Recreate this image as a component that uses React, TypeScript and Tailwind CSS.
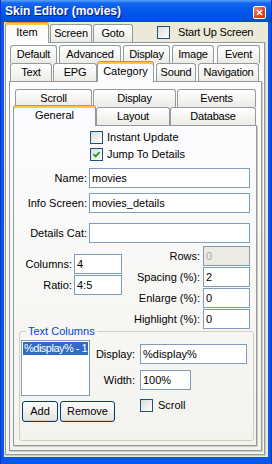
import React from "react";

const font = "font-['Liberation_Sans',Arial,sans-serif]";

function Check({ checked = false }: { checked?: boolean }) {
  return (
    <span className="flex h-[13px] w-[13px] shrink-0 items-center justify-center border border-[#1C5180] bg-linear-to-br from-[#DCDCD7] to-white">
      {checked && (
        <svg width="9" height="9" viewBox="0 0 9 9">
          <path d="M1.5 4.2 L3.6 6.4 L7.6 2.2" stroke="#21A121" strokeWidth="1.9" fill="none" />
        </svg>
      )}
    </span>
  );
}

function Field({ value, cls, disabled = false }: { value: string; cls: string; disabled?: boolean }) {
  return (
    <div
      className={`${cls} flex h-[20px] shrink-0 items-center overflow-hidden whitespace-nowrap border border-[#7F9DB9] pl-[2px] leading-none ${
        disabled ? "bg-[#EBEBE4] text-[#ACA899]" : "bg-white text-black"
      }`}
    >
      {value}
    </div>
  );
}

function Tab({ label, cls, sel = false }: { label: string; cls: string; sel?: boolean }) {
  if (sel) {
    return (
      <div
        className={`${cls} relative z-10 -mb-px flex h-[21px] shrink-0 items-center justify-center rounded-t-[3px] border border-b-0 border-[#919B9C] border-t-[#E68B2C] bg-[#FCFCFE] pb-[1px] shadow-[inset_0_2px_0_#FFC73C]`}
      >
        {label}
      </div>
    );
  }
  return (
    <div
      className={`${cls} flex h-[18px] shrink-0 items-center justify-center whitespace-nowrap rounded-t-[3px] border border-b-0 border-[#919B9C] bg-linear-to-b from-white to-[#ECEBE6] tracking-[-0.2px]`}
    >
      {label}
    </div>
  );
}

function Btn({ label, cls }: { label: string; cls: string }) {
  return (
    <div
      className={`${cls} flex h-[21px] shrink-0 items-center justify-center rounded-[3px] border border-[#003C74] bg-linear-to-b from-white to-[#E3E2DA] shadow-[inset_0_-1px_0_#D6D0C5]`}
    >
      {label}
    </div>
  );
}

function LabeledField({
  label,
  value,
  labelCls,
  fieldCls,
  rowCls = "",
  disabled = false,
}: {
  label: string;
  value: string;
  labelCls: string;
  fieldCls: string;
  rowCls?: string;
  disabled?: boolean;
}) {
  return (
    <div className={`flex items-center ${rowCls}`}>
      <span className={`${labelCls} shrink-0 whitespace-nowrap text-right`}>{label}</span>
      <Field value={value} cls={fieldCls} disabled={disabled} />
    </div>
  );
}

export default function App() {
  return (
    <div
      className={`${font} flex h-[464px] w-[272px] select-none flex-col border-x border-[#0831D9] bg-[#0A58E6] text-[11px] text-black`}
    >
      {/* Title bar */}
      <div className="flex h-[22px] shrink-0 items-start bg-[linear-gradient(to_bottom,#5AA2FA_0%,#1467EF_14%,#0058EA_50%,#0052E2_85%,#0049D2_100%)] pl-[4px] pr-[5px]">
        <span className="mt-[4px] flex-1 text-[12px] font-bold leading-[15px] text-white [text-shadow:1px_1px_0_#0A1883]">
          Skin Editor (movies)
        </span>
        <div className="mt-[6px] flex h-[13px] w-[13px] items-center justify-center rounded-[2px] border border-white bg-linear-to-br from-[#EE9277] via-[#DC4D2C] to-[#BF3715]">
          <svg width="7" height="7" viewBox="0 0 7 7">
            <path d="M1 1L6 6M6 1L1 6" stroke="white" strokeWidth="1.7" />
          </svg>
        </div>
      </div>

      {/* Client area */}
      <div className="mx-[3px] mb-[7px] flex flex-1 flex-col bg-[#ECE9D8]">
        {/* Level 1 tabs */}
        <div className="flex h-[20px] shrink-0 items-end pl-[1px]">
          <Tab label="Item" cls="w-[44px]" sel />
          <Tab label="Screen" cls="ml-[1px] w-[42px]" />
          <Tab label="Goto" cls="ml-[1px] w-[40px]" />
          <div className="ml-[24px] flex items-center self-center">
            <Check />
            <span className="ml-[8px] tracking-[-0.2px]">Start Up Screen</span>
          </div>
        </div>

        {/* Outer panel */}
        <div className="mb-[2px] ml-[1px] flex w-[260px] flex-1 flex-col border border-[#919B9C] bg-linear-to-b from-[#FCFCFE] to-[#F4F3EE] shadow-[1px_1px_0_#D0CEC2]">
          <div className="mt-[2px] flex h-[18px] shrink-0 items-end pl-[4px]">
            <Tab label="Default" cls="w-[47px]" />
            <Tab label="Advanced" cls="ml-[2px] w-[62px]" />
            <Tab label="Display" cls="ml-[2px] w-[47px]" />
            <Tab label="Image" cls="ml-[2px] w-[42px]" />
            <Tab label="Event" cls="ml-[3px] w-[43px]" />
          </div>
          <div className="flex h-[18px] shrink-0 items-end pl-[4px]">
            <Tab label="Text" cls="w-[42px]" />
            <Tab label="EPG" cls="ml-[1px] w-[44px]" />
            <Tab label="Category" cls="w-[57px]" sel />
            <Tab label="Sound" cls="ml-[2px] w-[40px]" />
            <Tab label="Navigation" cls="ml-[2px] w-[61px]" />
          </div>

          {/* Second panel */}
          <div className="mb-[3px] ml-[3px] flex w-[253px] flex-1 flex-col border border-[#919B9C] bg-linear-to-b from-[#FCFCFE] to-[#F4F3EE] shadow-[1px_1px_0_#D0CEC2]">
            <div className="mt-[7px] flex h-[18px] shrink-0 items-end pl-[5px]">
              <Tab label="Scroll" cls="w-[77px]" />
              <Tab label="Display" cls="ml-[1px] w-[83px]" />
              <Tab label="Events" cls="ml-[1px] w-[79px]" />
            </div>
            <div className="flex h-[18px] shrink-0 items-end pl-[3px]">
              <Tab label="General" cls="w-[83px]" sel />
              <Tab label="Layout" cls="w-[74px]" />
              <Tab label="Database" cls="w-[86px]" />
            </div>

            {/* Third panel */}
            <div className="mb-[4px] ml-[3px] flex w-[244px] flex-1 flex-col border border-[#919B9C] bg-linear-to-b from-[#FCFCFE] to-[#F4F3EE] pt-[5px] shadow-[1px_1px_0_#D0CEC2]">
              <div className="flex h-[13px] items-center pl-[76px]">
                <Check />
                <span className="ml-[4px]">Instant Update</span>
              </div>
              <div className="mt-[4px] flex h-[13px] items-center pl-[76px]">
                <Check checked />
                <span className="ml-[4px]">Jump To Details</span>
              </div>

              <LabeledField label="Name:" value="movies" labelCls="w-[73px]" fieldCls="ml-[2px] w-[161px]" rowCls="mt-[7px]" />
              <LabeledField label="Info Screen:" value="movies_details" labelCls="w-[73px]" fieldCls="ml-[2px] w-[161px]" rowCls="mt-[5px]" />
              <LabeledField label="Details Cat:" value="" labelCls="w-[73px]" fieldCls="ml-[2px] w-[161px]" rowCls="mt-[10px]" />

              <div className="mt-[3px] flex">
                <div className="mt-[8px] flex w-[108px] shrink-0 flex-col gap-[1px]">
                  <LabeledField label="Columns:" value="4" labelCls="w-[58px]" fieldCls="ml-[2px] w-[48px]" />
                  <LabeledField label="Ratio:" value="4:5" labelCls="w-[58px]" fieldCls="ml-[2px] w-[48px]" />
                </div>
                <div className="flex flex-1 flex-col items-end gap-[1px] pr-[6px]">
                  <LabeledField label="Rows:" value="0" labelCls="" fieldCls="ml-[3px] w-[47px]" disabled />
                  <LabeledField label="Spacing (%):" value="2" labelCls="" fieldCls="ml-[3px] w-[47px]" />
                  <LabeledField label="Enlarge (%):" value="0" labelCls="" fieldCls="ml-[3px] w-[47px]" />
                  <LabeledField label="Highlight (%):" value="0" labelCls="" fieldCls="ml-[3px] w-[47px]" />
                </div>
              </div>

              <fieldset className="-mt-[4px] ml-[5px] w-[235px] rounded-[3px] border border-[#D0D0BF] pb-[18px]">
                <legend className="ml-[6px] px-[2px] leading-[13px] text-[#0046D5]">Text Columns</legend>
                <div className="mt-[2px] flex">
                  <div className="ml-[1px] h-[56px] w-[69px] shrink-0 border border-[#7F9DB9] bg-white p-[1px]">
                    <div className="h-[13px] overflow-hidden whitespace-nowrap bg-[#316AC5] pl-[1px] leading-[13px] tracking-[-0.5px] text-white">
                      %display% - 1
                    </div>
                  </div>
                  <div className="flex flex-col">
                    <LabeledField label="Display:" value="%display%" labelCls="w-[45px]" fieldCls="ml-[5px] w-[107px]" rowCls="mt-[4px]" />
                    <LabeledField label="Width:" value="100%" labelCls="w-[45px]" fieldCls="ml-[5px] w-[51px]" rowCls="mt-[6px]" />
                  </div>
                </div>
                <div className="flex items-start">
                  <Btn label="Add" cls="ml-[2px] mt-[5px] w-[36px]" />
                  <Btn label="Remove" cls="ml-[2px] mt-[5px] w-[55px]" />
                  <div className="ml-[25px] mt-[1px] flex items-center">
                    <Check />
                    <span className="ml-[5px]">Scroll</span>
                  </div>
                </div>
              </fieldset>
            </div>
          </div>
        </div>
      </div>
    </div>
  );
}
